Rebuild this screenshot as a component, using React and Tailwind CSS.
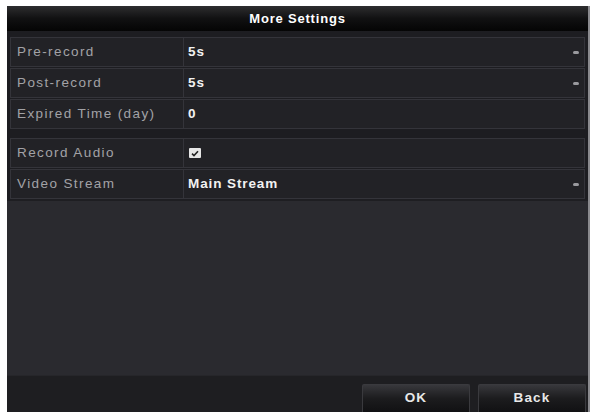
import React from 'react';

const ROWS_A = [
  { label: 'Pre-record', value: '5s', select: true },
  { label: 'Post-record', value: '5s', select: true },
  { label: 'Expired Time (day)', value: '0' },
];

const ROWS_B = [
  { label: 'Record Audio', check: true },
  { label: 'Video Stream', value: 'Main Stream', select: true },
];

const Caret = () => (
  <span className="ml-auto mr-[3px] w-[6px] h-[3px] rounded-full bg-[#9a9a9e]" />
);

const Row = ({ row }) => (
  <div className="flex h-[30px] border border-[#34343a] bg-[#222226]">
    <div className="w-[173px] flex items-center pl-[6px] text-[13.5px] tracking-[1.4px] text-[#a2a2a6] border-r border-[#34343a]">
      {row.label}
    </div>
    <div className="flex-1 flex items-center pl-[4px] pr-[2px] text-[13.5px] tracking-[0.9px] font-bold text-[#f2f2f2]">
      {row.check ? (
        <span className="ml-[1px] w-[12px] h-[10px] bg-[#e6e6e6] rounded-[1px] flex items-center justify-center">
          <svg width="8" height="7" viewBox="0 0 8 7">
            <path d="M1 3.6 L3 5.5 L7 1.2" stroke="#222" strokeWidth="1.6" fill="none" />
          </svg>
        </span>
      ) : (
        row.value
      )}
      {row.select && <Caret />}
    </div>
  </div>
);

export default function App() {
  return (
    <div className="w-[595px] h-[412px] bg-white pl-[7px] pr-[5px] pt-[6px] font-['Liberation_Sans',Arial,sans-serif] overflow-hidden">
      <div className="h-full flex flex-col bg-[#1e1e22] border-r-[2px] border-[#8a8a8e]">
        {/* Title */}
        <div className="h-[25px] flex items-center justify-center bg-gradient-to-b from-[#2e2e30] via-[#111112] to-[#050505] text-white text-[13px] tracking-[0.8px] font-bold">
          More Settings
        </div>

        {/* Rows */}
        <div className="px-[3px] pt-[6px] flex flex-col gap-[1px] bg-[#1d1d21]">
          {ROWS_A.map(r => <Row key={r.label} row={r} />)}
        </div>
        <div className="h-[9px] bg-[#1d1d21]" />
        <div className="px-[3px] flex flex-col gap-[1px] bg-[#1d1d21]">
          {ROWS_B.map(r => <Row key={r.label} row={r} />)}
        </div>

        {/* Empty area */}
        <div className="flex-1 mt-[2px] bg-[#2a2a2f]" />

        {/* Footer */}
        <div className="h-[37px] bg-[#1e1e21] flex items-end justify-end gap-[8px] pr-[2px] border-t border-[#26262a]">
          {['OK', 'Back'].map(b => (
            <div
              key={b}
              className="w-[108px] h-[28px] flex items-center justify-center rounded-t-[2px] bg-gradient-to-b from-[#38383c] via-[#1c1c1e] to-[#111113] border border-[#3a3a3e] border-b-0 text-[13.5px] tracking-[1.2px] font-bold text-[#e8e8e8]"
            >
              {b}
            </div>
          ))}
        </div>
      </div>
    </div>
  );
}
